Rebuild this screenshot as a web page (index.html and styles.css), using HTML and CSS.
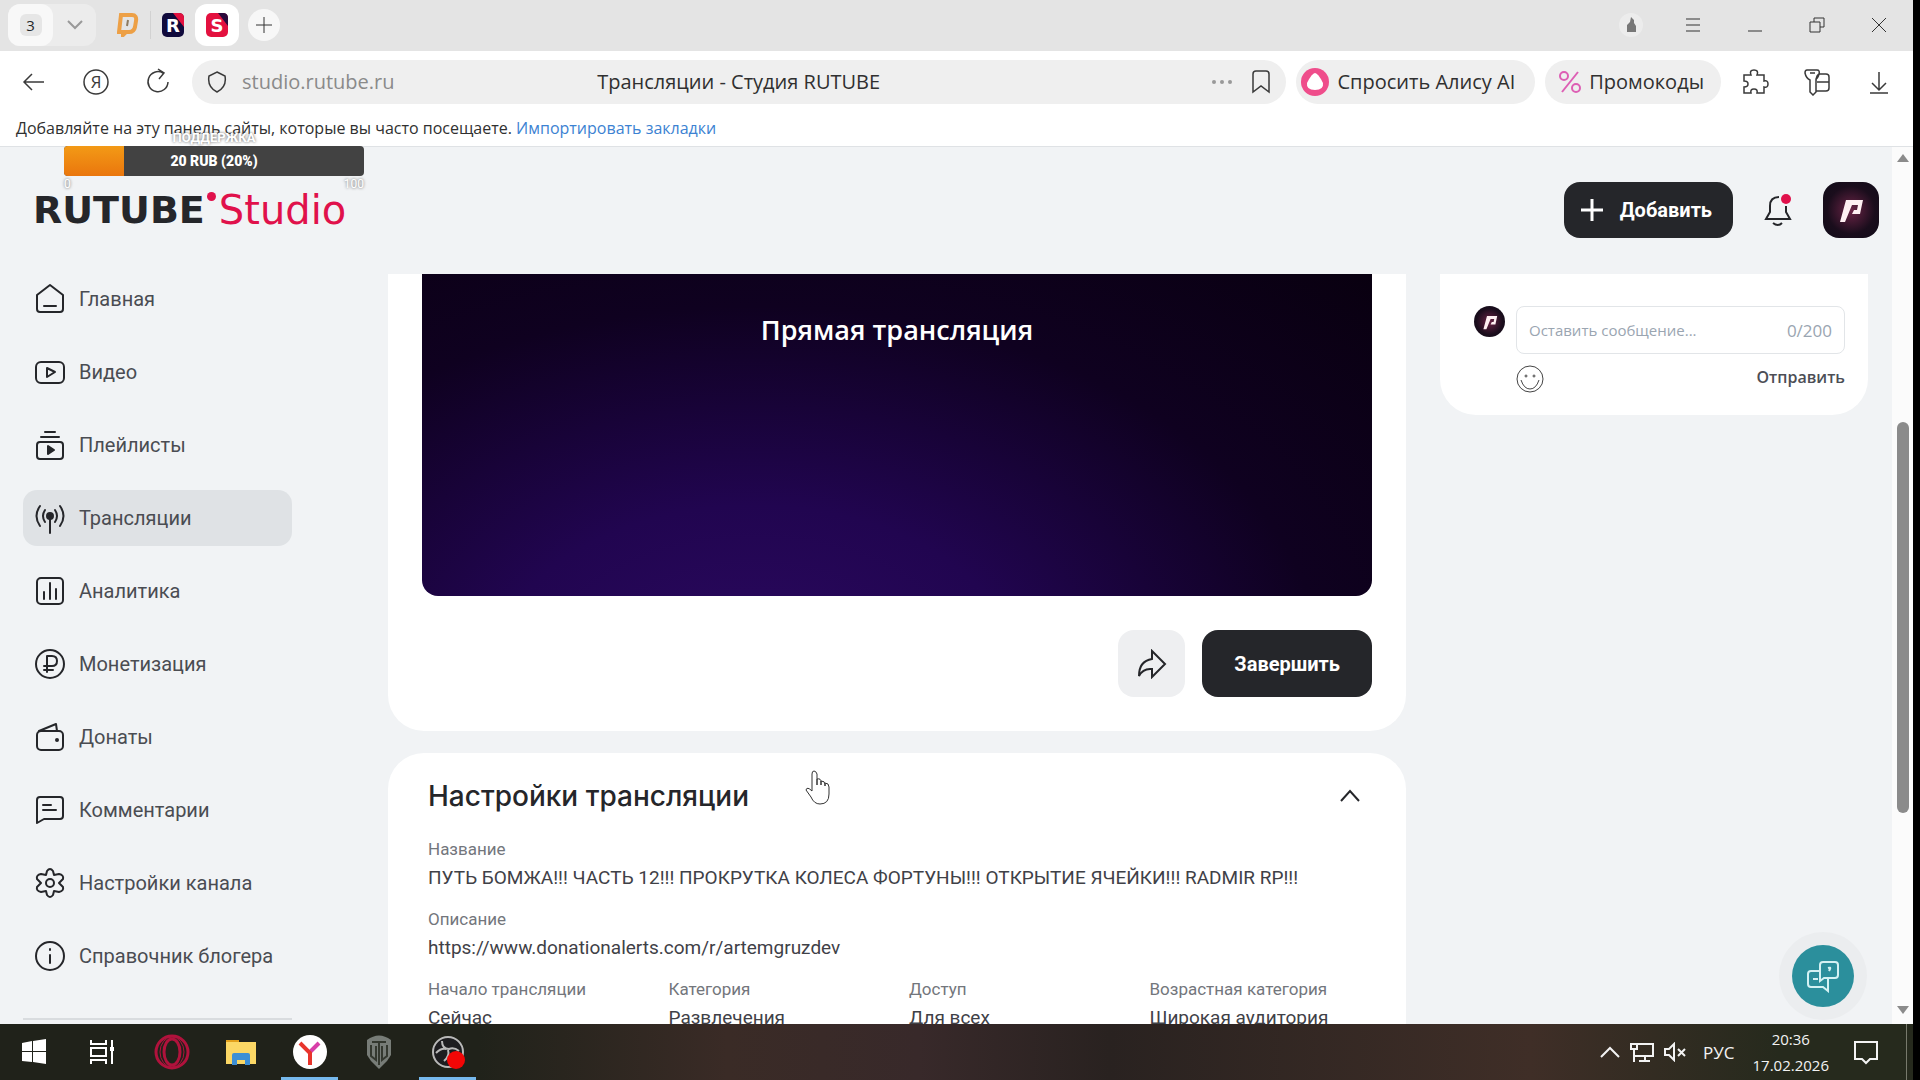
FILE: index.html
```html
<!DOCTYPE html>
<html lang="ru">
<head>
  <meta charset="UTF-8" />
  <meta name="viewport" content="width=device-width, initial-scale=1.0" />
  <title>Трансляции - Студия RUTUBE</title>
  <link rel="stylesheet" href="styles.css">
</head>
<body>
  <div class="tabs">
    <div class="tab-group">
      <button class="tab-count"><span>3</span></button>
      <button class="tab-more" aria-label="Список вкладок"><svg width="16" height="10" viewBox="0 0 16 10"><path d="M1 1l7 7 7-7" /></svg></button>
    </div>
    <button class="tab" aria-label="DonationAlerts">
      <svg width="22" height="24" viewBox="0 0 22 24"><path d="M4 2h11q5 0 4 6l-1 6q-1 5-6 5H9l-3 3v-3H2z" fill="none" stroke="#eda046" stroke-width="4" /><path d="M11 7l-1 6" stroke="#8d7a60" stroke-width="2" /></svg>
    </button>
    <span class="tab-line"></span>
    <button class="tab" aria-label="RUTUBE">
      <svg width="22" height="24" viewBox="0 0 22 24"><rect width="22" height="24" rx="5" fill="#100a3c" /><path d="M11 0h6q5 0 5 5v9z" fill="#e3113f" /><text x="11" y="19" class="tab-letter">R</text></svg>
    </button>
    <button class="tab tab-active" aria-label="Студия RUTUBE">
      <svg width="22" height="24" viewBox="0 0 22 24"><rect width="22" height="24" rx="5" fill="#e3113f" /><path d="M12 0h5q5 0 5 5v8z" fill="#2a0b3c" /><text x="11" y="19" class="tab-letter">S</text></svg>
    </button>
    <button class="tab-new" aria-label="Новая вкладка"><svg width="16" height="16" viewBox="0 0 16 16"><path d="M8 0v16M0 8h16" /></svg></button>
    <div class="window-buttons">
      <button aria-label="Профиль"><svg class="profile-icon" width="26" height="26" viewBox="0 0 26 26"><circle cx="13" cy="13" r="12" fill="#ececec" /><path d="M9 20v-7l3-3 1-5 3 3v3l2 3v6z" fill="#777" /></svg></button>
      <button aria-label="Меню"><svg width="16" height="16" viewBox="0 0 16 16"><path d="M1 2h14M1 8h14M1 14h14" /></svg></button>
      <button aria-label="Свернуть"><svg width="16" height="16" viewBox="0 0 16 16"><path d="M1 14h14" /></svg></button>
      <button aria-label="Развернуть"><svg width="16" height="16" viewBox="0 0 16 16"><path d="M5 5V1h10v9h-4M1 5h10v10H1z" /></svg></button>
      <button aria-label="Закрыть"><svg width="16" height="16" viewBox="0 0 16 16"><path d="M1 1l14 14M15 1L1 15" /></svg></button>
    </div>
  </div>

  <div class="toolbar">
    <div class="nav-buttons">
      <button aria-label="Назад"><svg width="28" height="28" viewBox="0 0 28 28"><path d="M24 14H5M12 6l-8 8 8 8" /></svg></button>
      <button aria-label="Яндекс"><svg width="28" height="28" viewBox="0 0 28 28"><circle cx="14" cy="14" r="12" /><text x="14" y="20" class="ya-letter">Я</text></svg></button>
      <button aria-label="Обновить"><svg width="28" height="28" viewBox="0 0 28 28"><path d="M24 14a10 10 0 1 1-5-9M14 1l6 4-5 6" /></svg></button>
    </div>
    <div class="address">
      <svg width="20" height="24" viewBox="0 0 20 24"><path d="M10 2l8 4q2 11-8 16Q0 17 2 6z" /></svg>
      <label class="sr-only" for="url">Адрес</label>
      <input type="text" id="url" value="studio.rutube.ru">
      <span class="address-title">Трансляции - Студия RUTUBE</span>
      <button class="dots" aria-label="Ещё"><svg width="22" height="6" viewBox="0 0 22 6"><circle cx="3" cy="3" r="2" /><circle cx="11" cy="3" r="2" /><circle cx="19" cy="3" r="2" /></svg></button>
      <button aria-label="В закладки"><svg width="20" height="24" viewBox="0 0 20 24"><path d="M2 22V4q0-3 3-3h10q3 0 3 3v18l-8-6z" /></svg></button>
    </div>
    <button class="pill">
      <svg width="28" height="28" viewBox="0 0 28 28"><circle cx="14" cy="14" r="14" fill="#ef4d8b" /><path d="M14 5q3 0 8 10 1 7-8 7t-8-7q5-10 8-10z" fill="#fff" /></svg>
      Спросить Алису AI
    </button>
    <button class="pill pill-promo">
      <svg width="22" height="24" viewBox="0 0 22 24" fill="none" stroke="#dd5fb4" stroke-width="2"><circle cx="5" cy="6" r="4" /><circle cx="17" cy="18" r="4" /><path d="M19 2L3 22" /></svg>
      Промокоды
    </button>
    <div class="tools">
      <button aria-label="Расширения"><svg width="28" height="28" viewBox="0 0 28 28"><path d="M3 7h7q-2-5 3-5t3 5h7v6q4-1 4 3t-4 3v6h-7q1-4-3-4t-3 4H3v-6q4 0 4-3t-4-3z" /></svg></button>
      <button aria-label="Пароли"><svg width="28" height="28" viewBox="0 0 28 28"><path d="M4 2h10q3 0 2 4-1 4-3 5v13l-3 3-3-3V12Q3 10 2 5q0-3 2-3zM7 5h5M13 14q0-8 4-8h6q3 0 3 3v11q0 3-3 3H13M14 14h12" /></svg></button>
      <button aria-label="Загрузки"><svg width="28" height="28" viewBox="0 0 28 28"><path d="M14 4v17M7 15l7 7 7-7M5 25h18" /></svg></button>
    </div>
  </div>

  <div class="bookmarks">
    Добавляйте на эту панель сайты, которые вы часто посещаете. <a href="#">Импортировать закладки</a>
    <div class="goal">
      <div class="goal-name">ПОДДЕРЖКА</div>
      <div class="goal-bar"><span class="goal-fill" style="width: 20%"></span><b>20 RUB (20%)</b></div>
      <div class="goal-range"><span>0</span><span>100</span></div>
    </div>
  </div>

  <div class="viewport">
    <div class="page">
      <header>
        <a href="#" class="logo"><b>RUTUBE</b><i></i><span>Studio</span></a>
        <button class="dark-button add-button"><svg width="24" height="24" viewBox="0 0 24 24"><path d="M12 1v22M1 12h22" /></svg>Добавить</button>
        <button class="bell" aria-label="Уведомления"><svg width="30" height="34" viewBox="0 0 30 34"><path d="M16 4q-9 0-9 9v6l-4 7h24l-4-7v-6M10 30q5 4 9 0" /><circle cx="23" cy="6" r="5" /></svg></button>
        <button class="avatar" aria-label="Профиль"><svg width="30" height="30" viewBox="0 0 30 30"><path d="M10 5h17l-3 14h-8l2-4h3l1-5h-6L9 27H4z" /></svg></button>
      </header>

      <div class="content">
        <nav>
          <a href="#"><svg width="32" height="32" viewBox="0 0 32 32"><path d="M3 12L16 2l13 10v14q0 3-3 3H6q-3 0-3-3zM10 23h12" /></svg>Главная</a>
          <a href="#"><svg width="32" height="32" viewBox="0 0 32 32"><rect x="2" y="6" width="28" height="21" rx="5" /><path d="M13 12v9l8-5z" /></svg>Видео</a>
          <a href="#"><svg width="32" height="32" viewBox="0 0 32 32"><rect x="3" y="13" width="26" height="17" rx="3" /><path d="M7 8h18M11 3h10" /><path d="M14 17v8l6-4z" class="fill" /></svg>Плейлисты</a>
          <a href="#" class="active"><svg width="32" height="32" viewBox="0 0 32 32"><circle cx="16" cy="14" r="3" class="fill" /><path d="M16 15v16M11 8q-4 6 0 12M21 8q4 6 0 12M6 4q-7 10 0 20M26 4q7 10 0 20" /></svg>Трансляции</a>
          <a href="#"><svg width="32" height="32" viewBox="0 0 32 32"><rect x="3" y="3" width="26" height="26" rx="4" /><path d="M10 17v7M16 8v16M22 14v10" /></svg>Аналитика</a>
          <a href="#"><svg width="32" height="32" viewBox="0 0 32 32"><circle cx="16" cy="16" r="14" /><path d="M13 24V8h5q5 0 5 5t-5 5h-8M10 22h9" /></svg>Монетизация</a>
          <a href="#"><svg width="32" height="32" viewBox="0 0 32 32"><rect x="3" y="10" width="26" height="19" rx="4" /><path d="M5 10l17-7 1 7" /><circle cx="23" cy="19" r="1" class="fill" /></svg>Донаты</a>
          <a href="#"><svg width="32" height="32" viewBox="0 0 32 32"><path d="M3 29V6q0-3 3-3h20q3 0 3 3v16q0 3-3 3H10zM9 11h8M9 16h13" /></svg>Комментарии</a>
          <a href="#"><svg width="32" height="32" viewBox="0 0 32 32"><circle cx="16" cy="16" r="4" /><path d="M13 4q3-4 6 0l1 4 5-1q5 1 4 5l-4 4 4 4q1 4-4 5l-5-1-1 4q-3 4-6 0l-1-4-5 1q-5-1-4-5l4-4-4-4q-1-4 4-5l5 1z" /></svg>Настройки канала</a>
          <a href="#"><svg width="32" height="32" viewBox="0 0 32 32"><circle cx="16" cy="16" r="14" /><path d="M16 15v8M16 9v1" /></svg>Справочник блогера</a>
          <hr>
        </nav>

        <main>
          <section class="card stream">
            <div class="video">Прямая трансляция</div>
            <div class="stream-buttons">
              <button class="share" aria-label="Поделиться"><svg width="30" height="30" viewBox="0 0 30 30"><path d="M15 2l13 13-13 13v-8Q6 19 2 27 2 12 15 10z" /></svg></button>
              <button class="dark-button">Завершить</button>
            </div>
          </section>
          <section class="card settings">
            <div class="settings-head">
              <h2>Настройки трансляции</h2>
              <button aria-label="Скрыть настройки"><svg width="22" height="16" viewBox="0 0 22 16"><path d="M2 13l9-10 9 10" /></svg></button>
            </div>
            <dl>
              <div><dt>Название</dt><dd>ПУТЬ БОМЖА!!! ЧАСТЬ 12!!! ПРОКРУТКА КОЛЕСА ФОРТУНЫ!!! ОТКРЫТИЕ ЯЧЕЙКИ!!! RADMIR RP!!!</dd></div>
              <div><dt>Описание</dt><dd>https://www.donationalerts.com/r/artemgruzdev</dd></div>
            </dl>
            <dl class="settings-row">
              <div><dt>Начало трансляции</dt><dd>Сейчас</dd></div>
              <div><dt>Категория</dt><dd>Развлечения</dd></div>
              <div><dt>Доступ</dt><dd>Для всех</dd></div>
              <div><dt>Возрастная категория</dt><dd>Широкая аудитория</dd></div>
            </dl>
            <svg class="cursor" width="28" height="36" viewBox="0 0 28 36"><path d="M8 21V4q0-3 2-3t3 3v11V9q4-1 4 3v3-4q4 0 4 3v2-3q4 0 4 4v7q0 10-9 10-6 0-9-7l-5-7q1-4 6 1z" /></svg>
          </section>
        </main>

        <aside class="card chat">
          <span class="chat-avatar"><svg width="18" height="18" viewBox="0 0 30 30"><path d="M10 5h17l-3 14h-8l2-4h3l1-5h-6L9 27H4z" /></svg></span>
          <form>
            <div class="message">
              <label class="sr-only" for="message">Сообщение</label>
              <input type="text" id="message" placeholder="Оставить сообщение...">
              <span>0/200</span>
            </div>
            <div class="chat-buttons">
              <button type="button" aria-label="Смайлы"><svg width="28" height="28" viewBox="0 0 28 28"><circle cx="14" cy="14" r="13" /><path d="M5 15q3 9 9 9t9-9" /><circle cx="10" cy="11" r="1" /><circle cx="18" cy="11" r="1" /></svg></button>
              <button class="send">Отправить</button>
            </div>
          </form>
        </aside>
      </div>
      <button class="help" aria-label="Помощь"><svg width="34" height="34" viewBox="0 0 34 34"><path d="M17 3h12q3 0 3 3v10q0 3-3 3H18l-4 3V6q0-3 3-3M14 12H5q-3 0-3 3v10q0 3 3 3h12l5 4V20" /><path d="M22 9q3-1 2 1l-1 2M7 20h5" /></svg></button>
    </div>
    <div class="scrollbar">
      <svg width="12" height="8" viewBox="0 0 12 8"><path d="M6 0l6 8H0z" /></svg>
      <div class="scroll-track"><span></span></div>
      <svg width="12" height="8" viewBox="0 0 12 8"><path d="M6 8l6-8H0z" /></svg>
    </div>
  </div>

  <div class="taskbar">
    <button aria-label="Пуск"><svg width="36" height="36" viewBox="0 0 36 36" fill="#fff"><path d="M6 9l10-2v10H6zM17 7l13-2v12H17zM6 18h10v10L6 27zM17 18h13v12l-13-2z" /></svg></button>
    <button aria-label="Представление задач"><svg width="36" height="36" viewBox="0 0 36 36" fill="none" stroke="#fff" stroke-width="2"><path d="M6 6v4h15V6M6 30v-4h15v4M6 14h15v8H6zM27 6v24" /><path d="M25 15h4" stroke-width="4" /></svg></button>
    <button aria-label="Opera"><svg width="36" height="36" viewBox="0 0 36 36" fill="none" stroke="#b0123c" stroke-width="3"><circle cx="18" cy="18" r="16" /><ellipse cx="18" cy="18" rx="8" ry="13" /><ellipse cx="18" cy="18" rx="12" ry="15" stroke-width="1" /></svg></button>
    <button aria-label="Проводник"><svg width="36" height="36" viewBox="0 0 36 36"><path d="M3 6h13v4H3z" fill="#e3a11c" /><path d="M3 8h30v22H3z" fill="#fbd765" /><path d="M9 31V21q0-2 2-2h14q2 0 2 2v10h-5v-5h-8v5z" fill="#3d8fd6" /></svg></button>
    <button class="running" aria-label="Яндекс Браузер"><svg width="36" height="36" viewBox="0 0 36 36" fill="none" stroke-width="4"><circle cx="18" cy="18" r="17" fill="#fff" /><path d="M27 9l-9 9" stroke="#d83fa8" /><path d="M8 9l10 10v12" stroke="#e8352c" /></svg></button>
    <button aria-label="World of Tanks"><svg width="36" height="36" viewBox="0 0 36 36"><path d="M6 6q12-9 24 0v15l-4 6-8 8-8-8-4-6z" fill="#777c77" /><path d="M11 8h14M10 11v11l5 4V12M26 11v11l-5 4V12M18 9v22" fill="none" stroke="#34382f" stroke-width="2" /></svg></button>
    <button class="running" aria-label="OBS Studio"><svg width="36" height="36" viewBox="0 0 36 36"><circle cx="18" cy="18" r="15" fill="#1d1d20" stroke="#b9b9b9" stroke-width="2" /><path d="M12 7q0 8 7 8 5-2 10 2M18 16q2 6-4 11M16 15q-5-1-10 4" fill="none" stroke="#b9b9b9" stroke-width="2" /><circle cx="26" cy="26" r="9" fill="#f30606" /></svg></button>
    <div class="tray">
      <svg width="20" height="12" viewBox="0 0 20 12"><path d="M1 11l9-9 9 9" /></svg>
      <svg width="26" height="22" viewBox="0 0 26 22"><path d="M8 3h16v12H6M16 15v5M10 20h11M2 3h6v5H2zM5 8v13" /></svg>
      <svg width="22" height="20" viewBox="0 0 22 20"><path d="M1 7h4l5-5v16l-5-5H1zM14 7l7 7M21 7l-7 7" /></svg>
      <span class="lang">РУС</span>
      <time>20:36<br>17.02.2026</time>
      <svg width="26" height="26" viewBox="0 0 26 26"><path d="M2 3h22v17h-7l-4 4-4-4H2z" /></svg>
    </div>
  </div>
</body>
</html>
```
FILE: styles.css
```css
* {
  box-sizing: border-box;
}
body {
  margin: 0;
  height: 100vh;
  display: flex;
  flex-direction: column;
  overflow: hidden;
  border-right: 7px solid #000;
  font-family: Roboto, sans-serif;
  color: #25262a;
  background: #fff;
}
button,
input {
  font: inherit;
  color: inherit;
  background: none;
  border: none;
  padding: 0;
}
button {
  display: flex;
  align-items: center;
  justify-content: center;
  cursor: pointer;
}
svg {
  flex: none;
}
a {
  color: inherit;
  text-decoration: none;
}
.sr-only {
  position: absolute;
  width: 1px;
  height: 1px;
  overflow: hidden;
  clip-path: inset(50%);
}

/* browser tabs */
.tabs {
  display: flex;
  align-items: center;
  height: 51px;
  padding: 0 3px 2px 8px;
  background: #e4e4e4;
  font-family: "Open Sans", sans-serif;
}
.tab-group {
  display: flex;
  width: 88px;
  height: 42px;
  border-radius: 12px;
  background: #ececec;
  margin-right: 10px;
}
.tab-count {
  width: 45px;
  background: #f8f8f8;
  border-radius: 12px;
}
.tab-count span {
  width: 22px;
  line-height: 22px;
  font-size: 15px;
  border-radius: 6px;
  background: #e6e6e6;
}
.tab-more {
  flex: 1;
}
.tab-more svg {
  fill: none;
  stroke: #999;
  stroke-width: 2;
}
.tab {
  width: 44px;
  height: 42px;
  border-radius: 12px;
}
.tab-active {
  background: #fff;
}
.tab-line {
  width: 1px;
  height: 28px;
  background: #d2d2d2;
}
.tab-letter {
  font: bold 18px "DejaVu Sans", sans-serif;
  fill: #fff;
  text-anchor: middle;
}
.tab-new {
  width: 32px;
  height: 32px;
  margin-left: 9px;
  border-radius: 50%;
  background: #f7f7f7;
}
.tab-new svg,
.window-buttons svg {
  fill: none;
  stroke: #333;
}
.window-buttons {
  display: flex;
  margin-left: auto;
}
.window-buttons button {
  width: 62px;
  height: 48px;
}
.window-buttons .profile-icon {
  stroke: none;
}

/* address row */
.toolbar {
  display: flex;
  align-items: center;
  gap: 10px;
  height: 61px;
  padding-right: 3px;
  font-family: "Open Sans", sans-serif;
  font-size: 20px;
  color: #303030;
}
.nav-buttons {
  display: flex;
  margin-right: -7px;
  padding-left: 3px;
}
.nav-buttons button,
.tools button {
  width: 62px;
}
.nav-buttons svg,
.tools svg,
.address svg {
  fill: none;
  stroke: #3a3a3a;
  stroke-width: 1.5;
}
.ya-letter {
  font-size: 17px;
  text-anchor: middle;
  fill: #3a3a3a;
  stroke: none;
}
.address {
  flex: 1;
  display: flex;
  align-items: center;
  height: 44px;
  padding: 0 15px;
  border-radius: 22px;
  background: #efefef;
}
.address input {
  flex: 1;
  min-width: 0;
  margin-left: 15px;
  color: #8a8a8a;
}
.address-title {
  flex: 2;
  padding-left: 48px;
}
.address .dots {
  margin-right: 18px;
}
.address .dots svg {
  fill: #999;
  stroke: none;
}
.pill {
  height: 44px;
  padding: 0 20px 0 5px;
  gap: 8px;
  border-radius: 22px;
  background: #efefef;
  white-space: nowrap;
}
.pill-promo {
  padding: 0 17px 0 14px;
}
.tools {
  display: flex;
  margin-left: -7px;
}

/* bookmarks bar with the donation goal on top */
.bookmarks {
  position: relative;
  height: 35px;
  padding-left: 16px;
  line-height: 32px;
  font-family: "Open Sans", sans-serif;
  font-size: 16px;
  color: #303030;
  border-bottom: 1px solid #dfe2e5;
}
.bookmarks a {
  color: #3c82d2;
}
.goal {
  position: absolute;
  z-index: 2;
  top: 17px;
  left: 64px;
  width: 300px;
  font-family: Roboto, sans-serif;
  font-size: 12px;
  line-height: 16px;
  color: #fff;
  text-align: center;
  text-shadow: 0 0 3px #555;
}
.goal-name {
  font-size: 13px;
  font-weight: bold;
  line-height: 17px;
}
.goal-bar {
  position: relative;
  height: 30px;
  line-height: 30px;
  font-size: 14px;
  text-shadow: none;
  border-radius: 4px;
  background: #424242;
  overflow: hidden;
}
.goal-bar b {
  position: relative;
  font-weight: 900;
}
.goal-fill {
  position: absolute;
  left: 0;
  top: 0;
  height: 100%;
  background: linear-gradient(#f39a16, #ea760d);
}
.goal-range {
  display: flex;
  justify-content: space-between;
}

/* site */
.viewport {
  flex: 1;
  min-height: 0;
  display: flex;
  background: #f1f3f5;
}
.page {
  position: relative;
  flex: 1;
  min-width: 0;
  display: flex;
  flex-direction: column;
}
header {
  display: flex;
  align-items: center;
  height: 124px;
  padding: 2px 13px 0 33px;
}
.logo {
  display: flex;
  align-items: center;
  margin-right: auto;
  font-family: "DejaVu Sans", sans-serif;
  font-size: 38px;
  line-height: 38px;
}
.logo i {
  width: 9px;
  height: 9px;
  margin: -28px 3px 0 2px;
  border-radius: 50%;
  background: #e0114b;
}
.logo span {
  font-size: 40px;
  color: #e0114b;
}
.dark-button {
  height: 67px;
  padding: 0 32px;
  border-radius: 16px;
  background: #25262a;
  color: #fff;
  font-size: 20px;
  font-weight: bold;
}
.add-button {
  height: 56px;
  padding: 0 21px 0 16px;
  gap: 16px;
}
.add-button svg {
  stroke: #fff;
  stroke-width: 3;
}
.bell {
  margin: 0 30px;
}
.bell svg {
  fill: none;
  stroke: #25262a;
  stroke-width: 2;
}
.bell circle {
  fill: #e0114b;
  stroke: none;
}
.avatar {
  width: 56px;
  height: 56px;
  border-radius: 16px;
}
.avatar,
.chat-avatar {
  background: radial-gradient(circle, #6b2446, #1a0d1c 60%, #100b18);
}
.avatar svg,
.chat-avatar svg {
  fill: #fff0f2;
}
.content {
  flex: 1;
  min-height: 0;
  display: flex;
  align-items: flex-start;
  padding: 0 24px 0 23px;
  overflow: hidden;
}
nav {
  display: flex;
  flex-direction: column;
  gap: 17px;
  width: 269px;
  margin-right: 96px;
}
nav a {
  display: flex;
  align-items: center;
  gap: 13px;
  height: 56px;
  padding-left: 11px;
  border-radius: 14px;
  font-size: 20px;
  color: #4a4c52;
  white-space: nowrap;
}
nav a.active {
  background: #dfe2e5;
}
nav svg {
  fill: none;
  stroke: #25262a;
  stroke-width: 2;
  stroke-linejoin: round;
  stroke-linecap: round;
}
nav .fill {
  fill: #25262a;
}
nav hr {
  width: 100%;
  margin: 17px 0 0;
  border: none;
  border-top: 2px solid #d9dcdf;
}
main {
  flex: 1;
  min-width: 0;
}
.card {
  background: #fff;
  border-radius: 36px;
}
.stream {
  margin: 3px 0 22px;
  padding: 0 34px 34px;
  border-radius: 0 0 36px 36px;
}
.video {
  height: 322px;
  padding-top: 36px;
  border-radius: 0 0 16px 16px;
  background: radial-gradient(ellipse at 35% 125%, #2b0960, #210550 30%, #0f0120 65%, #090010);
  color: #fff;
  font: 600 27px/40px "Open Sans", sans-serif;
  text-align: center;
}
.stream-buttons {
  display: flex;
  justify-content: flex-end;
  gap: 17px;
  margin-top: 34px;
}
.share {
  width: 67px;
  border-radius: 16px;
  background: #eeeff1;
}
.share svg,
.settings-head svg {
  fill: none;
  stroke: #25262a;
  stroke-width: 2;
}
.settings {
  position: relative;
  padding: 25px 40px;
  border-radius: 36px 36px 0 0;
}
.settings-head {
  display: flex;
  justify-content: space-between;
  padding-right: 5px;
  margin-bottom: 24px;
}
h2 {
  margin: 0;
  font: 500 28px/36px Inter, sans-serif;
}
dl {
  margin: 0;
}
dl div {
  margin-bottom: 18px;
}
dt {
  font-size: 17px;
  line-height: 22px;
  color: #73767c;
}
dd {
  margin: 6px 0 0;
  font-size: 19px;
  line-height: 24px;
  color: #3f4147;
  white-space: nowrap;
}
.settings-row {
  display: grid;
  grid-template-columns: repeat(4, 1fr);
  margin-right: -24px;
}
.cursor {
  position: absolute;
  left: 416px;
  top: 17px;
  fill: #fff;
  stroke: #333;
}
.chat {
  display: flex;
  gap: 11px;
  width: 428px;
  margin: 3px 0 0 34px;
  padding: 32px 23px 22px 34px;
  border-radius: 0 0 36px 36px;
  font-family: "Open Sans", sans-serif;
}
.chat-avatar {
  display: flex;
  align-items: center;
  justify-content: center;
  width: 31px;
  height: 31px;
  border-radius: 50%;
}
form {
  flex: 1;
}
.message {
  display: flex;
  align-items: center;
  height: 48px;
  padding: 0 12px;
  border: 1px solid #e2e5e8;
  border-radius: 8px;
  font-size: 17px;
  color: #9aa5b1;
}
.message input {
  flex: 1;
  min-width: 0;
  font-size: 15px;
}
.message input::placeholder {
  color: #9aa5b1;
}
.chat-buttons {
  display: flex;
  align-items: flex-start;
  justify-content: space-between;
  margin-top: 11px;
}
.chat-buttons svg {
  fill: none;
  stroke: #444;
}
.send {
  font-size: 16px;
  line-height: 24px;
  font-weight: 600;
  color: #4c4e55;
}
.help {
  position: absolute;
  right: 38px;
  bottom: 17px;
  width: 62px;
  height: 62px;
  border-radius: 50%;
  background: #2b8f9c;
  box-shadow: 0 0 0 13px #ebedef;
}
.help svg {
  fill: none;
  stroke: #d3f1f3;
  stroke-width: 2;
}
.scrollbar {
  display: flex;
  flex-direction: column;
  align-items: center;
  width: 21px;
  padding: 7px 0 10px;
  background: #fbfbfb;
}
.scrollbar svg {
  fill: #8b8b8b;
}
.scroll-track {
  flex: 1;
  width: 12px;
  padding-top: 260px;
}
.scroll-track span {
  display: block;
  height: 67%;
  border-radius: 6px;
  background: #8b8b8b;
}

/* windows taskbar */
.taskbar {
  display: flex;
  height: 56px;
  background: linear-gradient(90deg, #20221a 25%, #3a2b26 38%, #38292a 48%, #292220 58%, #3f2e27 80%, #262a1d 93%);
}
.taskbar button {
  width: 57px;
  margin-right: 12px;
  border-bottom: 3px solid transparent;
  border-top: 3px solid transparent;
}
.taskbar button:first-child {
  margin-left: 5px;
}
.taskbar .running {
  border-bottom-color: #76b9ed;
}
.tray {
  display: flex;
  align-items: center;
  margin-left: auto;
  padding-right: 27px;
  border-right: 1px solid #77796c;
  margin-right: 6px;
  color: #f3f3f3;
  font-family: "Open Sans", sans-serif;
  font-size: 17px;
}
.tray svg {
  fill: none;
  stroke: #f3f3f3;
  stroke-width: 2;
  margin-right: 9px;
}
.tray svg:last-child {
  margin-right: 0;
}
.lang {
  margin: 0 18px 0 8px;
}
time {
  margin-right: 24px;
  line-height: 26px;
  font-size: 15px;
  text-align: center;
}
```
